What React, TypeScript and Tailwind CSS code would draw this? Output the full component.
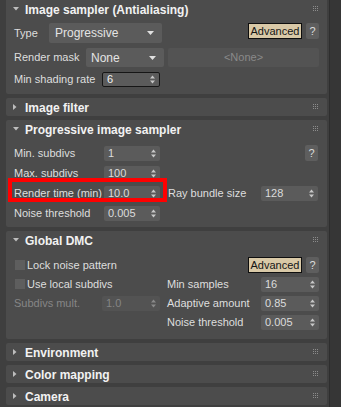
import React from "react";

const Grip = () => (
  <svg width="6" height="6" viewBox="0 0 6 6" className="block">
    {[0, 2, 4].map((y) =>
      [0, 2, 4].map((x) => <rect key={`${x}-${y}`} x={x} y={y} width="1" height="1" fill="#8c8c8c" />)
    )}
  </svg>
);

const TriDown = () => (
  <svg width="6" height="4" viewBox="0 0 6 4" className="block">
    <polygon points="0,0 6,0 3,3.5" fill="#bdbdbd" />
  </svg>
);

const TriRight = () => (
  <svg width="4" height="6" viewBox="0 0 4 6" className="block">
    <polygon points="0,0 3.5,3 0,6" fill="#bdbdbd" />
  </svg>
);

const SpinArrows = ({ color = "#c8c8c8" }: { color?: string }) => (
  <svg width="5" height="9" viewBox="0 0 5 9" className="block">
    <polygon points="0,3.5 2.5,0.5 5,3.5" fill={color} />
    <polygon points="0,5.5 5,5.5 2.5,8.5" fill={color} />
  </svg>
);

const DropArrow = () => (
  <svg width="7" height="4" viewBox="0 0 7 4" className="block">
    <polygon points="0,0 7,0 3.5,4" fill="#e0e0e0" />
  </svg>
);

function Header({ title, open }: { title: string; open: boolean }) {
  return (
    <div className="h-[18px] flex items-center pl-[7px] pr-[8px] shrink-0">
      <div className="w-[12px] flex items-center">{open ? <TriDown /> : <TriRight />}</div>
      <span className="text-[12px] font-bold text-[#f2f2f2] leading-none flex-1 pt-[2px]">{title}</span>
      <Grip />
    </div>
  );
}

function Spinner({
  value,
  w,
  disabled,
  focused,
}: {
  value: string;
  w: string;
  disabled?: boolean;
  focused?: boolean;
}) {
  return (
    <div
      className={`${w} h-[15px] rounded-[2px] flex items-center justify-between pl-[4px] pr-[4px] ${
        disabled ? "bg-[#535353] text-[#858585]" : "bg-[#5b5b5b] text-[#dcdcdc]"
      } ${focused ? "border border-[#161616] text-[#f4f4f4] pl-[3px]" : ""}`}
    >
      <span className="leading-none">{value}</span>
      <SpinArrows color={disabled ? "#8a8a8a" : "#c8c8c8"} />
    </div>
  );
}

function AdvancedBtn() {
  return (
    <div className="flex items-center gap-[4px]">
      <div className="w-[54px] h-[16px] bg-[#d9c9a7] border border-[#0e0e0e] flex items-center justify-center text-[#151515] leading-none">
        Advanced
      </div>
      <div className="w-[13px] h-[16px] bg-[#5e5e5e] rounded-[2px] flex items-center justify-center text-[#dcdcdc] leading-none">
        ?
      </div>
    </div>
  );
}

function Check({ label }: { label: string }) {
  return (
    <div className="h-[16px] flex items-center pl-[9px]">
      <div className="w-[10px] h-[10px] bg-[#5e5e5e] mr-[2px]" />
      <span className="leading-none text-[#dedede]">{label}</span>
    </div>
  );
}

function Collapsed({ title }: { title: string }) {
  return (
    <div className="h-[18px] bg-[#4c4c4c] rounded-[2px] shrink-0 flex flex-col">
      <Header title={title} open={false} />
    </div>
  );
}

export default function App() {
  return (
    <div
      className="w-[341px] h-[407px] overflow-hidden bg-[#3f3f3f] flex text-[11px] text-[#dedede]"
      style={{ fontFamily: '"Liberation Sans", Arial, sans-serif' }}
    >
      <div className="w-[329px] pl-[6px] pr-[2px] flex flex-col gap-[4px]">
        {/* Image sampler */}
        <div className="h-[94px] bg-[#4c4c4c] rounded-b-[2px] shrink-0 flex flex-col">
          <Header title="Image sampler (Antialiasing)" open />
          <div className="mt-[5px] h-[20px] flex items-start pl-[8px] pr-[8px]">
            <span className="w-[35px] h-[20px] flex items-center leading-none">Type</span>
            <div className="w-[113px] h-[20px] bg-[#5b5b5b] rounded-[2px] flex items-center justify-between pl-[6px] pr-[8px]">
              <span className="leading-none text-[12px] text-[#e4e4e4]">Progressive</span>
              <DropArrow />
            </div>
            <div className="flex-1" />
            <AdvancedBtn />
          </div>
          <div className="mt-[5px] h-[19px] flex items-center pl-[8px] pr-[8px]">
            <span className="w-[72px] leading-none">Render mask</span>
            <div className="w-[78px] h-[19px] bg-[#5b5b5b] rounded-[2px] flex items-center justify-between pl-[5px] pr-[8px]">
              <span className="leading-none text-[12px] text-[#e4e4e4]">None</span>
              <DropArrow />
            </div>
            <div className="ml-[4px] flex-1 h-[19px] bg-[#535353] rounded-[2px] flex items-center justify-center text-[#8a8a8a] leading-none">
              &lt;None&gt;
            </div>
          </div>
          <div className="mt-[5px] h-[15px] flex items-center pl-[8px]">
            <span className="w-[88px] leading-none">Min shading rate</span>
            <Spinner value="6" w="w-[58px]" focused />
          </div>
        </div>

        <Collapsed title="Image filter" />

        {/* Progressive image sampler */}
        <div className="relative h-[107px] bg-[#4c4c4c] rounded-[2px] shrink-0 flex flex-col">
          <Header title="Progressive image sampler" open />
          <div className="pt-[7px] flex">
            <div className="w-[154px] pl-[8px] flex flex-col gap-[4px]">
              {[
                ["Min. subdivs", "1"],
                ["Max. subdivs", "100"],
                ["Render time (min)", "10.0"],
                ["Noise threshold", "0.005"],
              ].map(([l, v]) => (
                <div key={l} className="h-[16px] flex items-center">
                  <span className="w-[90px] leading-none">{l}</span>
                  <Spinner value={v} w="w-[56px]" />
                </div>
              ))}
            </div>
            <div className="flex-1 pl-[8px] pr-[9px] flex flex-col gap-[4px]">
              <div className="h-[16px] flex items-center justify-end">
                <div className="w-[13px] h-[16px] bg-[#5e5e5e] rounded-[2px] flex items-center justify-center text-[#dcdcdc] leading-none">
                  ?
                </div>
              </div>
              <div className="h-[16px]" />
              <div className="h-[16px] flex items-center">
                <span className="w-[93px] leading-none">Ray bundle size</span>
                <Spinner value="128" w="w-[57px]" />
              </div>
            </div>
          </div>
          <div className="absolute left-[2px] top-[58px] w-[159px] h-[24px] border-[4px] border-[#ff0000]" />
        </div>

        {/* Global DMC */}
        <div className="h-[108px] bg-[#4c4c4c] rounded-[2px] shrink-0 flex flex-col">
          <Header title="Global DMC" open />
          <div className="pt-[8px] flex">
            <div className="w-[154px] flex flex-col gap-[3px]">
              <Check label="Lock noise pattern" />
              <Check label="Use local subdivs" />
              <div className="h-[16px] flex items-center pl-[8px]">
                <span className="w-[88px] leading-none text-[#868686]">Subdivs mult.</span>
                <Spinner value="1.0" w="w-[58px]" disabled />
              </div>
            </div>
            <div className="flex-1 pl-[7px] pr-[8px] flex flex-col gap-[3px]">
              <div className="h-[16px] flex items-center justify-end">
                <AdvancedBtn />
              </div>
              {[
                ["Min samples", "16"],
                ["Adaptive amount", "0.85"],
                ["Noise threshold", "0.005"],
              ].map(([l, v]) => (
                <div key={l} className="h-[16px] flex items-center">
                  <span className="w-[94px] leading-none">{l}</span>
                  <Spinner value={v} w="w-[58px]" />
                </div>
              ))}
            </div>
          </div>
        </div>

        <Collapsed title="Environment" />
        <Collapsed title="Color mapping" />
        <Collapsed title="Camera" />
      </div>
      <div className="flex-1 bg-[#363636] border-l border-[#2e2e2e]" />
    </div>
  );
}
